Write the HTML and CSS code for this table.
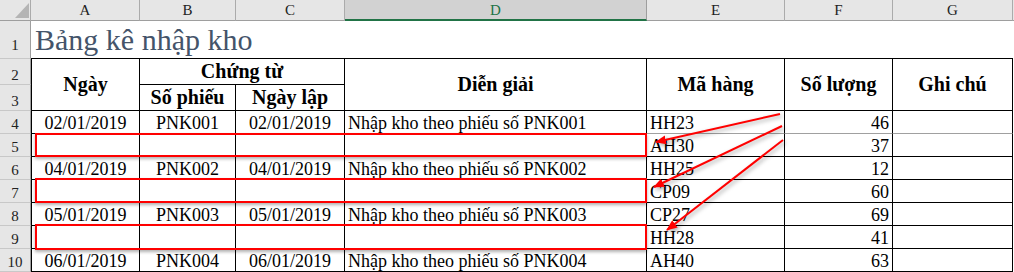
FILE: index.html
```html
<!DOCTYPE html>
<html lang="vi">
<head>
<meta charset="utf-8">
<title>Bảng kê nhập kho</title>
<link rel="stylesheet" href="styles.css">
</head>
<body>
<div class="sheet">
  <div class="corner"><svg width="14" height="15" viewBox="0 0 14 15"><path d="M14 0V15H0Z" fill="#b4b4b4"/></svg></div>
  <div class="colhead">A</div>
  <div class="colhead">B</div>
  <div class="colhead">C</div>
  <div class="colhead selected">D</div>
  <div class="colhead">E</div>
  <div class="colhead">F</div>
  <div class="colhead">G</div>
  <div class="colhead sliver"></div>

  <div class="rowhead tall">1</div>
  <div class="title">Bảng kê nhập kho</div>

  <div class="rowhead">2</div>
  <div class="th first span-r">Ngày</div>
  <div class="th span-c">Chứng từ</div>
  <div class="th span-r">Diễn giải</div>
  <div class="th span-r">Mã hàng</div>
  <div class="th span-r">Số lượng</div>
  <div class="th span-r">Ghi chú</div>

  <div class="rowhead">3</div>
  <div class="th">Số phiếu</div>
  <div class="th">Ngày lập</div>

  <div class="rowhead">4</div>
  <div class="td first c">02/01/2019</div>
  <div class="td c">PNK001</div>
  <div class="td c">02/01/2019</div>
  <div class="td l">Nhập kho theo phiếu số PNK001</div>
  <div class="td l soft">HH23</div>
  <div class="td r soft">46</div>
  <div class="td soft"></div>

  <div class="rowhead">5</div>
  <div class="td first"></div>
  <div class="td"></div>
  <div class="td"></div>
  <div class="td"></div>
  <div class="td l">AH30</div>
  <div class="td r">37</div>
  <div class="td"></div>

  <div class="rowhead">6</div>
  <div class="td first c">04/01/2019</div>
  <div class="td c">PNK002</div>
  <div class="td c">04/01/2019</div>
  <div class="td l">Nhập kho theo phiếu số PNK002</div>
  <div class="td l">HH25</div>
  <div class="td r">12</div>
  <div class="td"></div>

  <div class="rowhead">7</div>
  <div class="td first"></div>
  <div class="td"></div>
  <div class="td"></div>
  <div class="td"></div>
  <div class="td l">CP09</div>
  <div class="td r">60</div>
  <div class="td"></div>

  <div class="rowhead">8</div>
  <div class="td first c">05/01/2019</div>
  <div class="td c">PNK003</div>
  <div class="td c">05/01/2019</div>
  <div class="td l">Nhập kho theo phiếu số PNK003</div>
  <div class="td l">CP27</div>
  <div class="td r">69</div>
  <div class="td"></div>

  <div class="rowhead">9</div>
  <div class="td first"></div>
  <div class="td"></div>
  <div class="td"></div>
  <div class="td"></div>
  <div class="td l">HH28</div>
  <div class="td r">41</div>
  <div class="td"></div>

  <div class="rowhead">10</div>
  <div class="td first c">06/01/2019</div>
  <div class="td c">PNK004</div>
  <div class="td c">06/01/2019</div>
  <div class="td l">Nhập kho theo phiếu số PNK004</div>
  <div class="td l">AH40</div>
  <div class="td r">63</div>
  <div class="td"></div>

  <div class="mark m5"></div>
  <div class="mark m7"></div>
  <div class="mark m9"></div>

  <svg class="arrows" width="1014" height="272" viewBox="0 0 1014 272">
    <defs>
      <marker id="ah" markerWidth="11" markerHeight="9" refX="10" refY="4.5" orient="auto" markerUnits="userSpaceOnUse">
        <path d="M0 0L11 4.5L0 9Z" fill="#ff0000"/>
      </marker>
    </defs>
    <g stroke="#ff0000" stroke-width="2" fill="none">
      <line x1="780" y1="114" x2="656" y2="142" marker-end="url(#ah)"/>
      <line x1="782" y1="126" x2="654" y2="187" marker-end="url(#ah)"/>
      <line x1="783" y1="140" x2="667" y2="230" marker-end="url(#ah)"/>
    </g>
  </svg>
</div>
</body>
</html>
```
FILE: styles.css
```css
* { box-sizing: border-box; }
html, body { margin: 0; padding: 0; background: #fff; }
body {
  font-family: "Liberation Serif", "Times New Roman", serif;
  color: #000;
}
.sheet {
  position: relative;
  width: 1014px;
  height: 272px;
  overflow: hidden;
  display: grid;
  grid-template-columns: 31px 109px 96px 109px 302px 138px 108px 120px 1px;
  grid-template-rows: 21px 38px 26px 26px repeat(7, 23px);
}
.corner {
  background: #e6e6e6;
  border-right: 1px solid #ababab;
  border-bottom: 1px solid #9e9e9e;
  display: flex;
  justify-content: flex-end;
  align-items: flex-end;
  padding: 0 1px 2px 0;
}
.corner svg { display: block; }
.colhead {
  background: #e6e6e6;
  border-right: 1px solid #ababab;
  border-bottom: 1px solid #9e9e9e;
  font-size: 15px;
  line-height: 20px;
  text-align: center;
  color: #222;
}
.colhead.selected {
  background: #d2d2d2;
  color: #217346;
  border-bottom: 2px solid #217346;
  border-right-color: #9e9e9e;
}
.colhead.sliver { border-right: none; }
.rowhead {
  grid-column: 1;
  background: #e6e6e6;
  border-right: 1px solid #9e9e9e;
  border-bottom: 1px solid #c8c8c8;
  display: flex;
  justify-content: center;
  align-items: flex-end;
  font-size: 15px;
  line-height: 18px;
  color: #222;
}
.rowhead.tall { padding-bottom: 4px; }
.title {
  grid-column: 2 / 9;
  border-bottom: 1px solid #000;
  display: flex;
  align-items: flex-end;
  padding: 0 0 1px 4px;
  font-size: 30px;
  line-height: 34px;
  color: #44546a;
  white-space: nowrap;
}
.th {
  border-right: 1px solid #000;
  border-bottom: 1px solid #000;
  display: flex;
  align-items: center;
  justify-content: center;
  font-weight: bold;
  font-size: 20px;
  line-height: 23px;
  white-space: nowrap;
}
.span-r { grid-row: span 2; }
.span-c { grid-column: span 2; }
.first { border-left: 1px solid #000; }
.td {
  border-right: 1px solid #000;
  border-bottom: 1px solid #000;
  display: flex;
  align-items: flex-end;
  font-size: 18px;
  line-height: 20px;
  white-space: nowrap;
}
.td.c { justify-content: center; }
.td.l { padding-left: 3px; }
.td.r { justify-content: flex-end; padding-right: 3px; }
.td.soft { border-bottom-color: #a0a0a0; }
.mark {
  position: absolute;
  left: 35px;
  width: 612px;
  border: 2px solid #ff0000;
  box-shadow: 0 2px 3px rgba(0, 0, 0, 0.3);
}
.m5 { top: 133px; height: 24px; }
.m7 { top: 178px; height: 25px; }
.m9 { top: 224px; height: 26px; }
.arrows {
  position: absolute;
  left: 0;
  top: 0;
  pointer-events: none;
  filter: drop-shadow(2px 2px 2px rgba(0, 0, 0, 0.35));
}
```
